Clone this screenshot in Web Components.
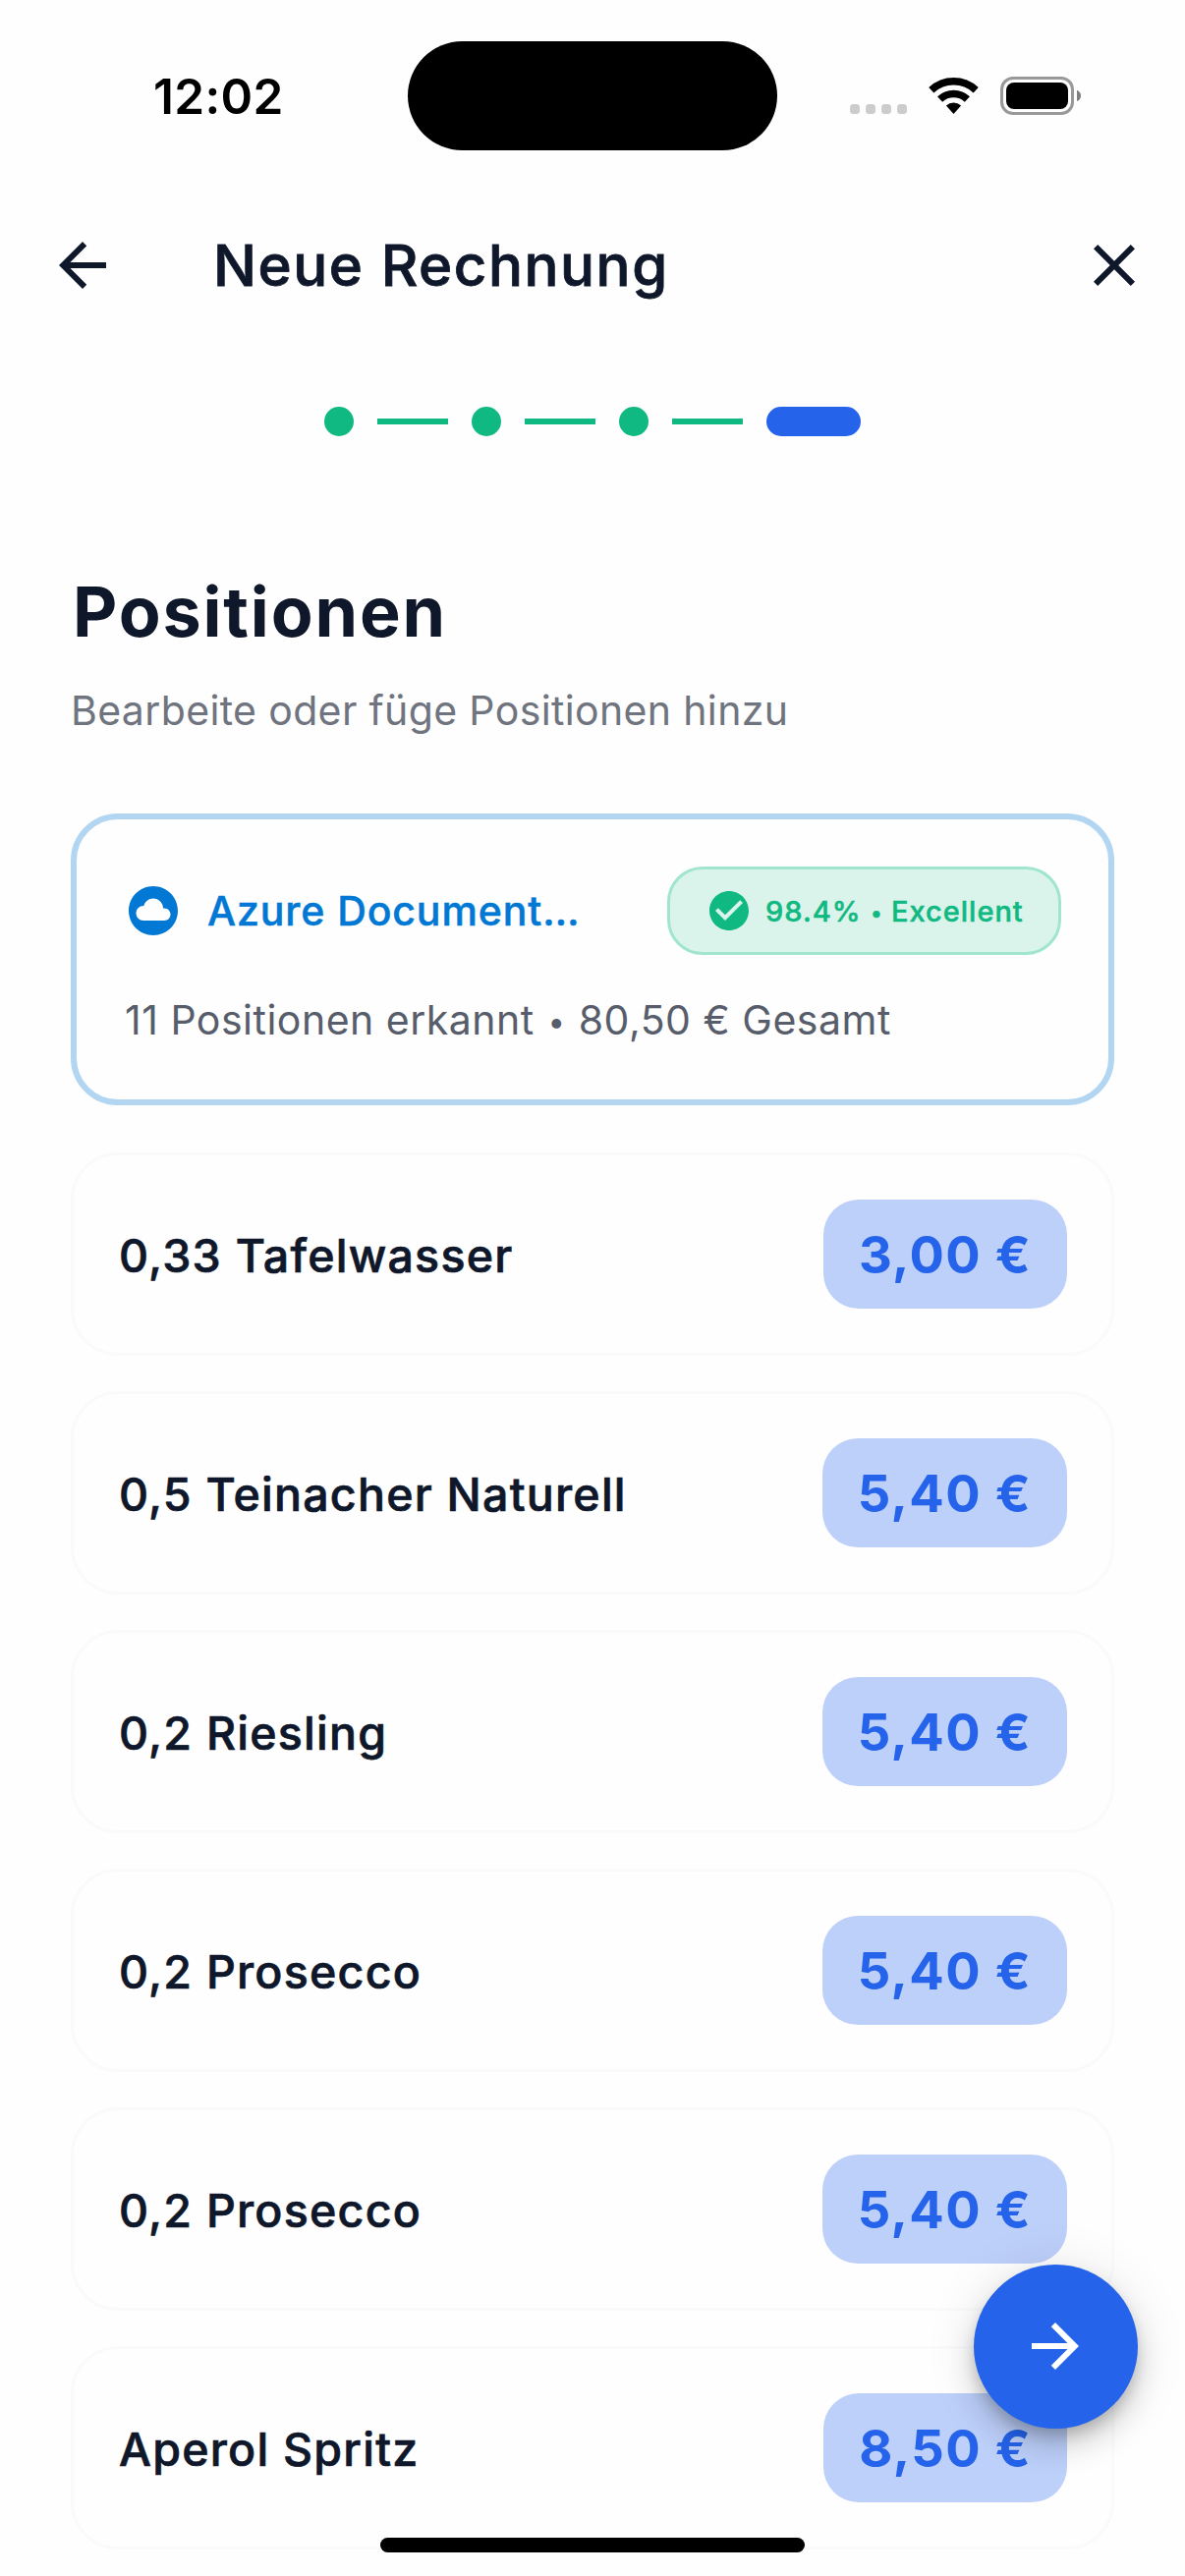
<!DOCTYPE html>
<html lang="de">
<head>
<meta charset="utf-8">
<title>Neue Rechnung</title>
<style>
    body {
        margin: 0;
        background: #fefefe;
        color: #0f172a;
        font-family: Inter, "Liberation Sans", sans-serif;
    }

    .bullet {
        display: inline-block;
        width: 21px;
        font-size: 0.76em;
        line-height: 1;
        letter-spacing: 0;
        text-align: center;
        vertical-align: 2px;
    }

    confidence-badge .bullet {
        width: 13px;
        vertical-align: 1px;
    }
</style>
</head>
<body>

<invoice-screen>
    <status-bar slot="top" time="12:02"></status-bar>
    <app-header slot="top">Neue Rechnung</app-header>
    <step-indicator slot="top" steps="4" current="4"></step-indicator>

    <section-title>
        Positionen
        <span slot="subtitle">Bearbeite oder füge Positionen hinzu</span>
    </section-title>

    <scan-summary>
        Azure Document…
        <confidence-badge slot="badge">98.4% <span class="bullet">•</span> Excellent</confidence-badge>
        <span slot="details">11 Positionen erkannt <span class="bullet">•</span> 80,50 € Gesamt</span>
    </scan-summary>

    <position-item preis="3,00 €">0,33 Tafelwasser</position-item>
    <position-item preis="5,40 €">0,5 Teinacher Naturell</position-item>
    <position-item preis="5,40 €">0,2 Riesling</position-item>
    <position-item preis="5,40 €">0,2 Prosecco</position-item>
    <position-item preis="5,40 €">0,2 Prosecco</position-item>
    <position-item preis="8,50 €">Aperol Spritz</position-item>

    <next-button slot="overlay"></next-button>
    <home-indicator slot="overlay"></home-indicator>
</invoice-screen>

<script>
function attach(element, html) {
    const shadow = element.attachShadow({ mode: 'open' });
    shadow.innerHTML = html;
    return shadow;
}

class InvoiceScreen extends HTMLElement {
    connectedCallback() {
        attach(this, `
            <style>
                :host {
                    display: block;
                    position: relative;
                    width: 1206px;
                    height: 2622px;
                    overflow: hidden;
                }

                main {
                    display: flex;
                    flex-direction: column;
                    gap: 36px;
                    padding: 135px 72px 0;
                }
            </style>
            <slot name="top"></slot>
            <main><slot></slot></main>
            <slot name="overlay"></slot>
        `);
    }
}

class StatusBar extends HTMLElement {
    connectedCallback() {
        const shadow = attach(this, `
            <style>
                :host {
                    display: grid;
                    grid-template-columns: 1fr 376px 1fr;
                    align-items: center;
                    box-sizing: border-box;
                    height: 186px;
                    padding-top: 8px;
                    color: #000;
                }

                .time {
                    padding: 2px 0 0 156px;
                    font-size: 49.5px;
                    font-weight: 600;
                    line-height: 60px;
                    letter-spacing: 0.35px;
                }

                .island {
                    height: 111px;
                    border-radius: 56px;
                    background: #000;
                }

                svg {
                    display: block;
                    margin-left: 74px;
                }
            </style>
            <div class="time"></div>
            <div class="island"></div>
            <svg width="236" height="41" viewBox="0 0 236 41">
                <g fill="#ccc">
                    <rect y="29" width="10" height="10" rx="3.5"/>
                    <rect x="16" y="29" width="10" height="10" rx="3.5"/>
                    <rect x="32" y="29" width="10" height="10" rx="3.5"/>
                    <rect x="48" y="29" width="10" height="10" rx="3.5"/>
                </g>
                <g fill="none" stroke="#000" stroke-width="7.5">
                    <path d="M82.8 14.7A33.25 33.25 0 0 1 128.2 14.7"/>
                    <path d="M91.6 24.1A20.35 20.35 0 0 1 119.4 24.1"/>
                </g>
                <path d="M105.5 39L97.9 30.4A11.7 11.7 0 0 1 113.1 30.4Z"/>
                <rect x="154.5" y="2.5" width="72" height="36" rx="11.5" fill="none" stroke="#999" stroke-width="3"/>
                <rect x="159" y="7" width="63" height="27" rx="8"/>
                <path d="M231 14.7c2.5 1 4 3 4 5.7s-1.5 4.7-4 5.7z" fill="#808080"/>
            </svg>
        `);
        shadow.querySelector('.time').textContent = this.getAttribute('time') || '';
    }
}

class AppHeader extends HTMLElement {
    connectedCallback() {
        attach(this, `
            <style>
                :host {
                    display: flex;
                    align-items: center;
                    height: 168px;
                    padding: 0 36px 0 48px;
                }

                h1 {
                    flex: 1;
                    margin: 0 0 0 97px;
                    font-size: 58.2px;
                    font-weight: 500;
                    line-height: 72px;
                    letter-spacing: 1.55px;
                    -webkit-text-stroke: 0.8px currentColor;
                }

                svg {
                    width: 72px;
                    height: 72px;
                    fill: currentColor;
                }
            </style>
            <svg viewBox="0 0 24 24"><path d="M20 11H7.83l5.59-5.59L12 4l-8 8 8 8 1.41-1.41L7.83 13H20v-2z"/></svg>
            <h1><slot></slot></h1>
            <svg viewBox="0 0 24 24"><path d="M19 6.41L17.59 5 12 10.59 6.41 5 5 6.41 10.59 12 5 17.59 6.41 19 12 13.41 17.59 19 19 17.59 13.41 12z"/></svg>
        `);
    }
}

class StepIndicator extends HTMLElement {
    connectedCallback() {
        const steps = Number(this.getAttribute('steps'));
        const current = Number(this.getAttribute('current'));
        const parts = [];

        for (let i = 1; i <= steps; i++) {
            parts.push(`<span class="${i === current ? 'active' : 'dot'}"></span>`);
            if (i < steps) {
                parts.push('<span class="line"></span>');
            }
        }

        attach(this, `
            <style>
                :host {
                    display: flex;
                    justify-content: center;
                    align-items: center;
                    gap: 24px;
                    padding-top: 60px;
                }

                .dot,
                .active {
                    width: 30px;
                    height: 30px;
                    border-radius: 15px;
                    background: #10b981;
                }

                .active {
                    width: 96px;
                    background: #2563eb;
                }

                .line {
                    width: 72px;
                    height: 6px;
                    background: #10b981;
                }
            </style>
            ${parts.join('')}
        `);
    }
}

class SectionTitle extends HTMLElement {
    connectedCallback() {
        attach(this, `
            <style>
                :host {
                    display: block;
                    margin-bottom: 44px;
                }

                h2 {
                    margin: 0 0 32px 2px;
                    font-size: 70px;
                    font-weight: 700;
                    line-height: 87px;
                    letter-spacing: 1.87px;
                }

                p {
                    margin: 0;
                    font-size: 41px;
                    line-height: 50px;
                    letter-spacing: 0.36px;
                    color: #6f747f;
                }
            </style>
            <h2><slot></slot></h2>
            <p><slot name="subtitle"></slot></p>
        `);
    }
}

class ScanSummary extends HTMLElement {
    connectedCallback() {
        attach(this, `
            <style>
                :host {
                    display: block;
                    box-sizing: border-box;
                    height: 297px;
                    margin-bottom: 12px;
                    padding: 48px;
                    border: 6px solid #b2d6f2;
                    border-radius: 48px;
                }

                .head {
                    display: flex;
                    align-items: center;
                    height: 90px;
                }

                svg {
                    width: 60px;
                    height: 60px;
                    fill: #0078d4;
                }

                .name {
                    flex: 1;
                    margin-left: 25px;
                    font-size: 41px;
                    font-weight: 500;
                    line-height: 50px;
                    letter-spacing: 0.9px;
                    -webkit-text-stroke: 0.5px currentColor;
                    color: #0078d4;
                }

                p {
                    margin: 33px 0 0 1px;
                    font-size: 41px;
                    line-height: 66px;
                    letter-spacing: 0.5px;
                    color: #575d6a;
                }
            </style>
            <div class="head">
                <svg viewBox="0 0 24 24"><path d="M12 2C6.48 2 2 6.48 2 12s4.48 10 10 10 10-4.48 10-10S17.52 2 12 2zm4.5 14H8c-1.66 0-3-1.34-3-3s1.34-3 3-3l.14.01C8.58 8.28 10.13 7 12 7c2.21 0 4 1.79 4 4h.5c1.38 0 2.5 1.12 2.5 2.5S17.88 16 16.5 16z"/></svg>
                <div class="name"><slot></slot></div>
                <slot name="badge"></slot>
            </div>
            <p><slot name="details"></slot></p>
        `);
    }
}

class ConfidenceBadge extends HTMLElement {
    connectedCallback() {
        attach(this, `
            <style>
                :host {
                    display: flex;
                    align-items: center;
                    gap: 13px;
                    box-sizing: border-box;
                    width: 401px;
                    height: 90px;
                    padding-left: 36px;
                    border: 3px solid #9fe6cc;
                    border-radius: 36px;
                    background: #dbf4eb;
                    color: #10b981;
                    font-size: 29px;
                    font-weight: 500;
                    line-height: 36px;
                    letter-spacing: 1px;
                    white-space: nowrap;
                }

                div {
                    padding-top: 1px;
                    -webkit-text-stroke: 0.5px currentColor;
                }

                svg {
                    width: 48px;
                    height: 48px;
                    fill: currentColor;
                }
            </style>
            <svg viewBox="0 0 24 24"><path d="M12 2C6.48 2 2 6.48 2 12s4.48 10 10 10 10-4.48 10-10S17.52 2 12 2zm-2 15l-5-5 1.41-1.41L10 14.17l7.59-7.59L19 8l-9 9z"/></svg>
            <div><slot></slot></div>
        `);
    }
}

class PositionItem extends HTMLElement {
    connectedCallback() {
        const shadow = attach(this, `
            <style>
                :host {
                    display: flex;
                    justify-content: space-between;
                    align-items: center;
                    padding: 45px;
                    border: 3px solid #f9fafc;
                    border-radius: 48px;
                }

                .name {
                    padding: 2px 0 0 1px;
                    font-size: 46.5px;
                    font-weight: 500;
                    line-height: 58px;
                    letter-spacing: 1.25px;
                    -webkit-text-stroke: 0.7px currentColor;
                }

                .preis {
                    padding: 2px 36px 0;
                    border-radius: 36px;
                    background: #bdd0fa;
                    color: #2563eb;
                    font-size: 52.5px;
                    font-weight: 700;
                    line-height: 109px;
                    letter-spacing: 1.35px;
                }
            </style>
            <div class="name"><slot></slot></div>
            <div class="preis"></div>
        `);
        shadow.querySelector('.preis').textContent = this.getAttribute('preis') || '';
    }
}

class NextButton extends HTMLElement {
    connectedCallback() {
        attach(this, `
            <style>
                :host {
                    position: absolute;
                    right: 48.5px;
                    bottom: 150.5px;
                    display: flex;
                    align-items: center;
                    justify-content: center;
                    width: 167px;
                    height: 167px;
                    border-radius: 50%;
                    background: #2563eb;
                    box-shadow:
                        0 9px 15px -3px rgba(0, 0, 0, 0.2),
                        0 18px 30px rgba(0, 0, 0, 0.14),
                        0 3px 54px rgba(0, 0, 0, 0.1);
                }

                svg {
                    width: 72px;
                    height: 72px;
                    fill: #fff;
                }
            </style>
            <svg viewBox="0 0 24 24"><path d="M12 4l-1.41 1.41L16.17 11H4v2h12.17l-5.58 5.59L12 20l8-8z"/></svg>
        `);
    }
}

class HomeIndicator extends HTMLElement {
    connectedCallback() {
        attach(this, `
            <style>
                :host {
                    position: absolute;
                    left: 387px;
                    bottom: 24px;
                    width: 432px;
                    height: 15px;
                    border-radius: 8px;
                    background: #000;
                }
            </style>
        `);
    }
}

customElements.define('invoice-screen', InvoiceScreen);
customElements.define('status-bar', StatusBar);
customElements.define('app-header', AppHeader);
customElements.define('step-indicator', StepIndicator);
customElements.define('section-title', SectionTitle);
customElements.define('scan-summary', ScanSummary);
customElements.define('confidence-badge', ConfidenceBadge);
customElements.define('position-item', PositionItem);
customElements.define('next-button', NextButton);
customElements.define('home-indicator', HomeIndicator);
</script>
</body>
</html>
